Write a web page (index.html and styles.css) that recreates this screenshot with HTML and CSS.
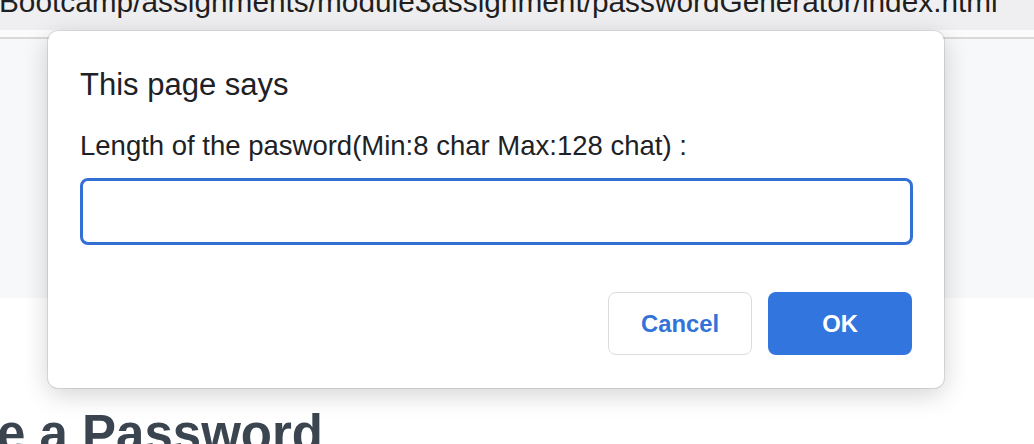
FILE: index.html
```html
<!DOCTYPE html>
<html>
<head>
<meta charset="utf-8">
<title>Password Generator</title>
<link rel="stylesheet" href="styles.css">
</head>
<body>
  <div class="topbar">
    <div class="url">Bootcamp/assignments/module3assignment/passwordGenerator/index.html</div>
  </div>
  <div class="strip"></div>
  <div class="page-top"></div>
  <main class="page-main">
    <h1 class="heading">e a Password</h1>
  </main>

  <div class="dialog" role="dialog">
    <div class="dialog-title">This page says</div>
    <div class="dialog-message">Length of the pasword(Min:8 char Max:128 chat) :</div>
    <input class="dialog-input" type="text">
    <div class="dialog-buttons">
      <button class="btn btn-cancel">Cancel</button>
      <button class="btn btn-ok">OK</button>
    </div>
  </div>
</body>
</html>
```

FILE: styles.css
```css
html, body {
  margin: 0;
  padding: 0;
  background: #ffffff;
  overflow: hidden;
  font-family: "Liberation Sans", Arial, sans-serif;
}

.topbar {
  height: 30px;
  background: #efeff1;
  overflow: hidden;
}

.url {
  margin-top: -13px;
  margin-left: -1px;
  font-size: 29.8px;
  line-height: 29.5px;
  color: #1f1f21;
  white-space: nowrap;
}

.strip {
  height: 7px;
  background: #fbfbfb;
  border-bottom: 2px solid #d9d9db;
}

.page-top {
  height: 259px;
  background: #f7f8fa;
}

.page-main {
  background: #ffffff;
  padding-top: 106px;
}

.heading {
  margin: 0 0 0 -3px;
  font-size: 51px;
  line-height: 60px;
  font-weight: bold;
  color: #3b4550;
  white-space: nowrap;
}

.dialog {
  position: absolute;
  left: 48px;
  top: 31px;
  width: 896px;
  box-sizing: border-box;
  padding: 36px 31px 33px 32px;
  background: #ffffff;
  border-radius: 10px;
  box-shadow: 0 0 0 1px rgba(0, 0, 0, 0.1), 0 6px 26px rgba(0, 0, 0, 0.18);
  color: #202124;
  display: flex;
  flex-direction: column;
}

.dialog-title {
  font-size: 31px;
  line-height: 36px;
}

.dialog-message {
  margin-top: 26px;
  font-size: 27.5px;
  line-height: 34px;
}

.dialog-input {
  margin: 15px 0 0 0;
  height: 67px;
  width: 100%;
  box-sizing: border-box;
  border: 3px solid #3270d6;
  border-radius: 8px;
  background: #ffffff;
  outline: none;
}

.dialog-buttons {
  margin-top: 47px;
  display: flex;
  justify-content: flex-end;
  gap: 16px;
  padding-right: 1px;
}

.btn {
  width: 144px;
  height: 63px;
  box-sizing: border-box;
  border-radius: 8px;
  font-family: "Liberation Sans", Arial, sans-serif;
  font-size: 23.8px;
  font-weight: bold;
  padding: 0;
  cursor: pointer;
}

.btn-cancel {
  background: #ffffff;
  border: 1.5px solid #dadce0;
  color: #3272d9;
}

.btn-ok {
  background: #3375de;
  border: none;
  color: #ffffff;
}
```
